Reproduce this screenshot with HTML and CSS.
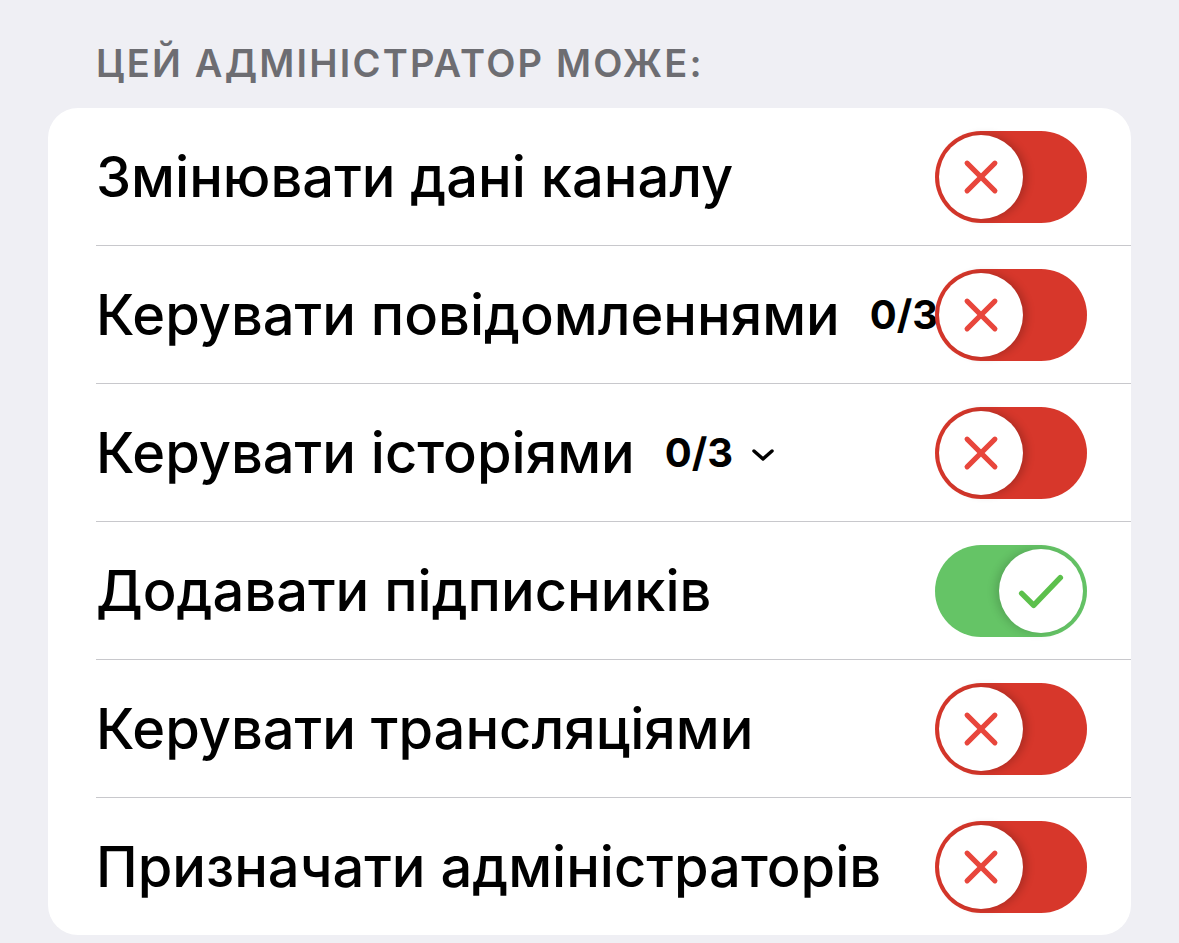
FILE: index.html
```html
<!DOCTYPE html>
<html lang="uk">
<head>
<meta charset="utf-8">
<link rel="stylesheet" href="styles.css">
</head>
<body>
<div class="page">
  <div class="section-title">ЦЕЙ АДМІНІСТРАТОР МОЖЕ:</div>
  <div class="card">
    <div class="row">
      <div class="label">Змінювати дані каналу</div>
      <div class="toggle off"><div class="knob"><svg viewBox="0 0 44 44"><path d="M5 5 L39 39 M39 5 L5 39"/></svg></div></div>
    </div>
    <div class="row">
      <div class="label">Керувати повідомленнями <span class="count">0/3</span></div>
      <div class="toggle off"><div class="knob"><svg viewBox="0 0 44 44"><path d="M5 5 L39 39 M39 5 L5 39"/></svg></div></div>
    </div>
    <div class="row">
      <div class="label">Керувати історіями <span class="count">0/3</span><svg class="chev" viewBox="0 0 24 14"><path d="M3 3 L12 11 L21 3"/></svg></div>
      <div class="toggle off"><div class="knob"><svg viewBox="0 0 44 44"><path d="M5 5 L39 39 M39 5 L5 39"/></svg></div></div>
    </div>
    <div class="row">
      <div class="label">Додавати підписників</div>
      <div class="toggle on"><div class="knob"><svg class="check" viewBox="0 0 50 40"><path d="M4 22 L17 35 L46 5"/></svg></div></div>
    </div>
    <div class="row">
      <div class="label">Керувати трансляціями</div>
      <div class="toggle off"><div class="knob"><svg viewBox="0 0 44 44"><path d="M5 5 L39 39 M39 5 L5 39"/></svg></div></div>
    </div>
    <div class="row">
      <div class="label">Призначати адміністраторів</div>
      <div class="toggle off"><div class="knob"><svg viewBox="0 0 44 44"><path d="M5 5 L39 39 M39 5 L5 39"/></svg></div></div>
    </div>
  </div>
</div>
</body>
</html>
```

FILE: styles.css
```css
html, body {
  margin: 0;
  padding: 0;
  background: #efeff4;
}
.page {
  padding: 40px 48px 0 48px;
  font-family: Inter, "Liberation Sans", sans-serif;
}
.section-title {
  padding-left: 48px;
  font-size: 38px;
  font-weight: 600;
  letter-spacing: 2.2px;
  color: #6d6d72;
  line-height: 46px;
  margin-bottom: 22px;
}
.card {
  background: #fff;
  border-radius: 30px;
  overflow: hidden;
}
.row {
  display: flex;
  align-items: center;
  height: 137px;
  padding: 0 44px 0 48px;
  position: relative;
}
.row + .row {
  border-top: 1.5px solid #c8c8cc;
  margin-left: 48px;
  padding-left: 0;
}
.label {
  flex: 1;
  min-width: 0;
  white-space: nowrap;
  font-size: 56px;
  font-weight: 500;
  color: #000;
  display: flex;
  align-items: center;
}
.count {
  font-size: 40px;
  font-weight: 700;
  margin-left: 30px;
}
.chev {
  width: 24px;
  height: 14px;
  margin-left: 18px;
  margin-top: 4px;
  fill: none;
  stroke: #000;
  stroke-width: 3.4;
  stroke-linecap: round;
  stroke-linejoin: round;
}
.toggle {
  flex: 0 0 auto;
  width: 152px;
  height: 92px;
  border-radius: 46px;
  display: flex;
  align-items: center;
  padding: 0 4px;
  box-sizing: border-box;
}
.toggle.off {
  background: #d7372b;
  justify-content: flex-start;
}
.toggle.on {
  background: #65c466;
  justify-content: flex-end;
}
.knob {
  width: 84px;
  height: 84px;
  border-radius: 50%;
  background: #fff;
  display: flex;
  align-items: center;
  justify-content: center;
  box-shadow: 4px 0 9px rgba(0, 0, 0, 0.2);
}
.toggle.on .knob {
  box-shadow: -4px 0 9px rgba(0, 0, 0, 0.15);
}
.knob svg {
  width: 36px;
  height: 36px;
  fill: none;
  stroke-width: 6.2;
  stroke-linecap: round;
  stroke-linejoin: round;
}
.knob svg.check {
  width: 46px;
  height: 37px;
  margin-top: 2px;
}
.toggle.off .knob svg {
  stroke: #e8463c;
}
.toggle.on .knob svg {
  stroke: #5cc04c;
  stroke-width: 6;
}
```
